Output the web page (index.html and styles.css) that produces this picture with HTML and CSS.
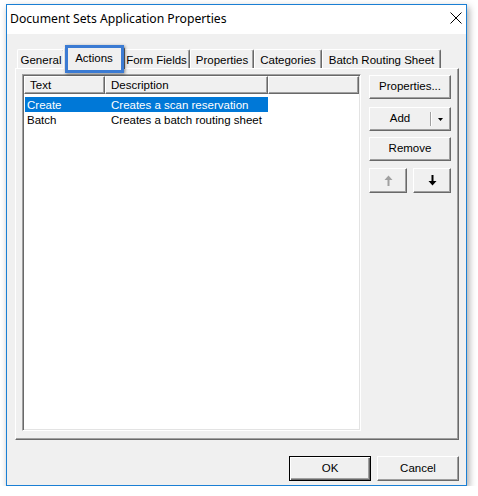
FILE: index.html
```html
<!DOCTYPE html>
<html>
<head>
<meta charset="utf-8">
<link rel="stylesheet" href="styles.css">
</head>
<body>
<div class="window">
  <div class="titlebar">
    <span class="title">Document Sets Application Properties</span>
    <svg class="close" width="12" height="12" viewBox="0 0 12 12"><path d="M0.5 0.5 L11.5 11.5 M11.5 0.5 L0.5 11.5" stroke="#000" stroke-width="1" fill="none"/></svg>
  </div>
  <div class="content">
    <div class="tabs">
      <div class="tab w-general">General</div>
      <div class="tab sel w-actions">Actions</div>
      <div class="tab w-form">Form Fields</div>
      <div class="tab w-props">Properties</div>
      <div class="tab w-cats">Categories</div>
      <div class="tab w-batch">Batch Routing Sheet</div>
    </div>
    <div class="panel">
      <div class="listview">
        <div class="lv-header">
          <div class="hcell h1">Text</div>
          <div class="hcell h2">Description</div>
          <div class="hcell h3"></div>
        </div>
        <div class="rows">
          <div class="row selected"><span class="c1">Create</span><span class="c2">Creates a scan reservation</span></div>
          <div class="row"><span class="c1">Batch</span><span class="c2">Creates a batch routing sheet</span></div>
        </div>
      </div>
      <div class="side">
        <div class="btn b-props">Properties...</div>
        <div class="btn split b-add"><span class="split-main">Add</span><span class="split-sep"></span><span class="split-arrow"><svg width="5" height="3" viewBox="0 0 5 3"><path d="M0 0 H5 L2.5 3 Z" fill="#000"/></svg></span></div>
        <div class="btn b-remove">Remove</div>
        <div class="arrows">
          <div class="btn arrow-btn"><svg width="9" height="11" viewBox="0 0 9 11"><path d="M4.5 0.5 L8.5 5 L5.5 5 L5.5 11 L3.5 11 L3.5 5 L0.5 5 Z" fill="#a0a0a0"/></svg></div>
          <div class="btn arrow-btn"><svg width="9" height="11" viewBox="0 0 9 11"><path d="M4.5 10.5 L8.5 6 L5.5 6 L5.5 0 L3.5 0 L3.5 6 L0.5 6 Z" fill="#000"/></svg></div>
        </div>
      </div>
    </div>
    <div class="footer">
      <div class="btn default">OK</div>
      <div class="btn">Cancel</div>
    </div>
  </div>
  <div class="annot"></div>
</div>
</body>
</html>
```
FILE: styles.css
```css
* { box-sizing: border-box; }
html, body { margin: 0; padding: 0; background: #fff; }
body { font-family: "Liberation Sans", Arial, sans-serif; font-size: 11.5px; color: #000; }

.window {
  position: relative;
  margin: 4px 0 0 6px;
  width: 461px;
  height: 482px;
  border: 1px solid #1a7fd4;
  background: #f0f0f0;
  box-shadow: 2px 3px 7px rgba(0,0,0,0.35);
  display: flex;
  flex-direction: column;
}
.titlebar {
  height: 29px;
  background: #fff;
  display: flex;
  align-items: center;
  padding-left: 3px;
  padding-right: 4px;
}
.title {
  flex: 1;
  font-family: "Noto Sans", sans-serif;
  font-size: 12.2px;
  margin-top: -3px;
}
.close { display: block; margin-top: -4px; }

.content {
  flex: 1;
  padding: 13px 7px 4px 8px;
  display: flex;
  flex-direction: column;
}
.tabs {
  height: 21px;
  display: flex;
  padding-left: 2px;
  position: relative;
  z-index: 2;
}
.tab {
  margin-top: 2px;
  height: 19px;
  border-top: 1px solid #fff;
  border-left: 1px solid #fff;
  border-right: 1px solid #696969;
  box-shadow: inset -1px 0 0 #a0a0a0;
  border-radius: 2px 2px 0 0;
  text-align: center;
  line-height: 20px;
  white-space: nowrap;
}
.tab.sel {
  margin: 0 -2px;
  height: 22px;
  background: #f0f0f0;
  position: relative;
  z-index: 3;
  line-height: 20px;
}
.w-general { width: 48px; }
.w-actions { width: 62px; }
.w-form { width: 67px; }
.w-props { width: 64px; }
.w-cats { width: 68px; }
.w-batch { width: 119px; }

.panel {
  height: 372px;
  border-top: 1px solid #fff;
  border-left: 1px solid #fff;
  border-right: 1px solid #696969;
  border-bottom: 1px solid #696969;
  box-shadow: inset -1px -1px 0 #a0a0a0;
  padding: 5px 7px 8px 6px;
  display: flex;
  gap: 8px;
  align-items: flex-start;
}
.listview {
  width: 340px;
  height: 357px;
  background: #fff;
  border-top: 1px solid #a0a0a0;
  border-left: 1px solid #a0a0a0;
  border-right: 1px solid #fff;
  border-bottom: 1px solid #fff;
  box-shadow: inset 1px 1px 0 #696969, inset -1px -1px 0 #e3e3e3;
  padding: 1px;
}
.lv-header {
  display: flex;
  height: 18px;
}
.hcell {
  height: 18px;
  background: #f0f0f0;
  border-top: 1px solid #fff;
  border-left: 1px solid #fff;
  border-right: 1px solid #696969;
  border-bottom: 1px solid #696969;
  box-shadow: inset -1px -1px 0 #a0a0a0;
  padding-left: 5px;
  line-height: 17px;
}
.h1 { width: 81px; }
.h2 { width: 163px; }
.h3 { flex: 1; }
.rows { padding-top: 3px; }
.row {
  display: flex;
  height: 15px;
  line-height: 16px;
  margin-left: 1px;
  width: 243px;
}
.row.selected { background: #0078d7; color: #fff; }
.c1 { width: 80px; padding-left: 2px; }
.c2 { padding-left: 6px; white-space: nowrap; }

.side {
  width: 82px;
  padding-top: 1px;
  display: flex;
  flex-direction: column;
}
.btn {
  height: 24px;
  background: #f0f0f0;
  border-top: 1px solid #fff;
  border-left: 1px solid #fff;
  border-right: 1px solid #696969;
  border-bottom: 1px solid #696969;
  box-shadow: inset -1px -1px 0 #a0a0a0;
  display: flex;
  align-items: center;
  justify-content: center;
  line-height: 1;
  white-space: nowrap;
}
.b-props { margin-bottom: 8px; }
.b-add { margin-bottom: 6px; }
.b-remove { margin-bottom: 7px; height: 24px; }
.split { justify-content: flex-start; }
.split-main { width: 60px; text-align: center; }
.split-sep {
  width: 2px;
  height: 14px;
  border-left: 1px solid #a0a0a0;
  border-right: 1px solid #fff;
}
.split-arrow { flex: 1; display: flex; justify-content: center; padding-right: 1px; }
.split-arrow svg { display: block; }
.arrows { display: flex; gap: 6px; }
.arrow-btn { width: 38px; height: 25px; }
.arrow-btn svg { display: block; }

.footer {
  margin-top: 16px;
  display: flex;
  justify-content: flex-end;
  gap: 6px;
}
.footer .btn { width: 82px; height: 25px; }
.btn.default {
  border: 1px solid #000;
  box-shadow: inset 1px 1px 0 #fff, inset -1px -1px 0 #696969, inset -2px -2px 0 #a0a0a0;
}

.annot {
  position: absolute;
  left: 58px;
  top: 40px;
  width: 59px;
  height: 28px;
  border: 3px solid #3b7bd3;
  box-shadow: 1px 1px 3px rgba(0,0,0,0.45);
  z-index: 5;
}
```
